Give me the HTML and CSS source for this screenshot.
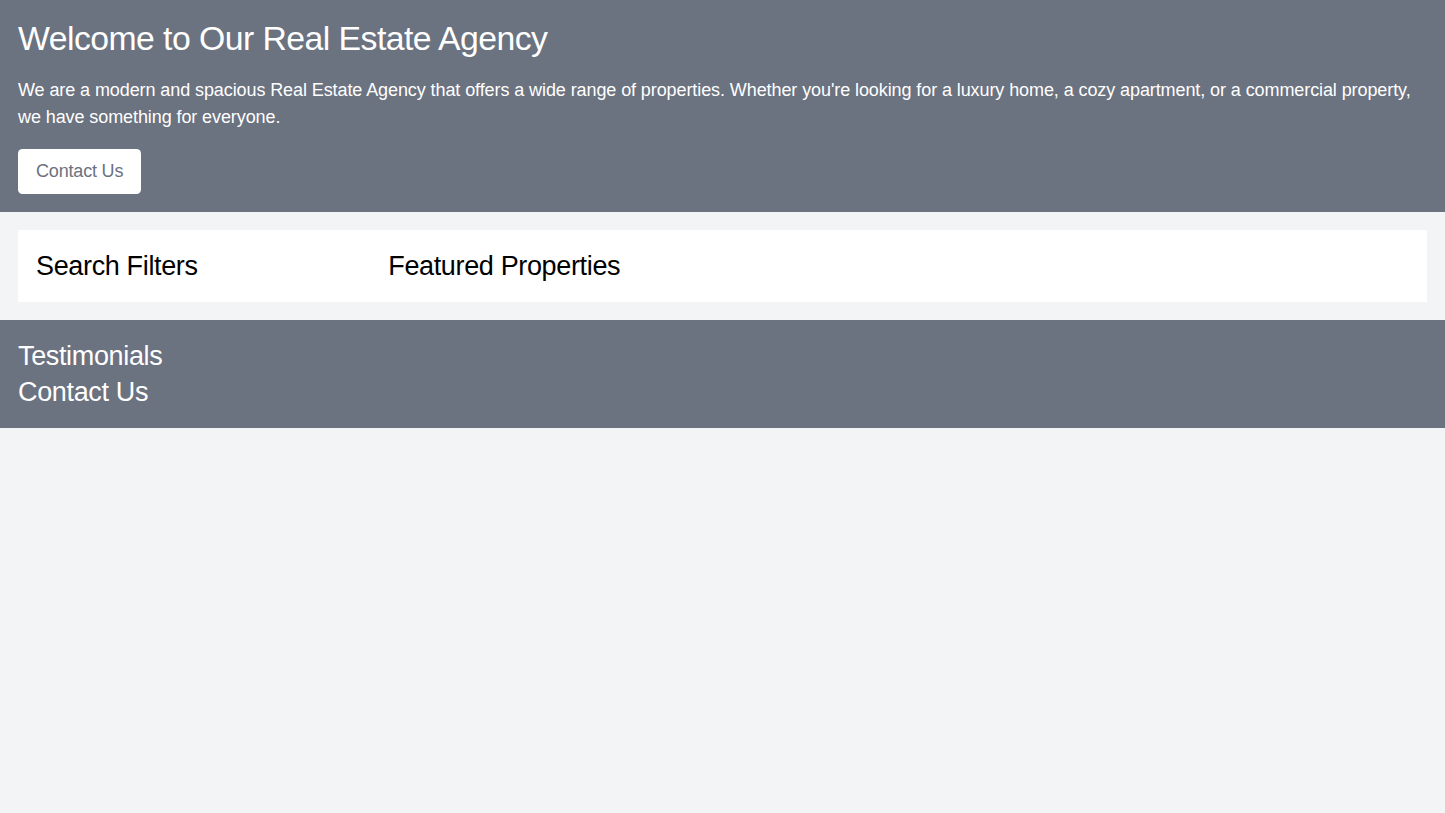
FILE: index.html
```html
<!DOCTYPE html>
<html lang="en">
<head>
<meta charset="utf-8">
<title>Real Estate Agency</title>
<link rel="stylesheet" href="styles.css">
</head>
<body>
  <header class="hero">
    <h1 class="hero-title">Welcome to Our Real Estate Agency</h1>
    <p class="hero-text">We are a modern and spacious Real Estate Agency that offers a wide range of properties. Whether you're looking for a luxury home, a cozy apartment, or a commercial property, we have something for everyone.</p>
    <button class="hero-button">Contact Us</button>
  </header>
  <main class="content">
    <div class="panel">
      <section class="filters">
        <h2 class="section-title">Search Filters</h2>
      </section>
      <section class="featured">
        <h2 class="section-title">Featured Properties</h2>
      </section>
    </div>
  </main>
  <footer class="footer">
    <h2 class="section-title">Testimonials</h2>
    <h2 class="section-title">Contact Us</h2>
  </footer>
</body>
</html>
```
FILE: styles.css
```css
html {
  font-size: 18px;
}
* {
  box-sizing: border-box;
}
body {
  margin: 0;
  background: #f3f4f6;
  font-family: "Liberation Sans", Arial, sans-serif;
  font-size: 1rem;
  line-height: 1.5rem;
}
h1, h2, p {
  margin: 0;
  font-weight: 400;
}
.hero {
  background: #6b7280;
  color: #fff;
  padding: 1rem;
}
.hero-title {
  font-size: 1.875rem;
  line-height: 2.25rem;
  letter-spacing: -0.016em;
  margin-bottom: 1rem;
}
.hero-text {
  letter-spacing: -0.005em;
  margin-bottom: 1rem;
}
.hero-button {
  font: inherit;
  letter-spacing: -0.01em;
  background: #fff;
  color: #6b7280;
  border: 0;
  border-radius: 0.25rem;
  padding: 0.5rem 1rem;
  cursor: pointer;
}
.content {
  padding: 1rem;
}
.panel {
  background: #fff;
  display: flex;
}
.filters {
  width: 25%;
  padding: 1rem;
}
.featured {
  width: 75%;
  padding: 1rem;
}
.section-title {
  font-size: 1.5rem;
  line-height: 2rem;
  letter-spacing: -0.013em;
}
.footer {
  background: #6b7280;
  color: #fff;
  padding: 1rem;
}
```
